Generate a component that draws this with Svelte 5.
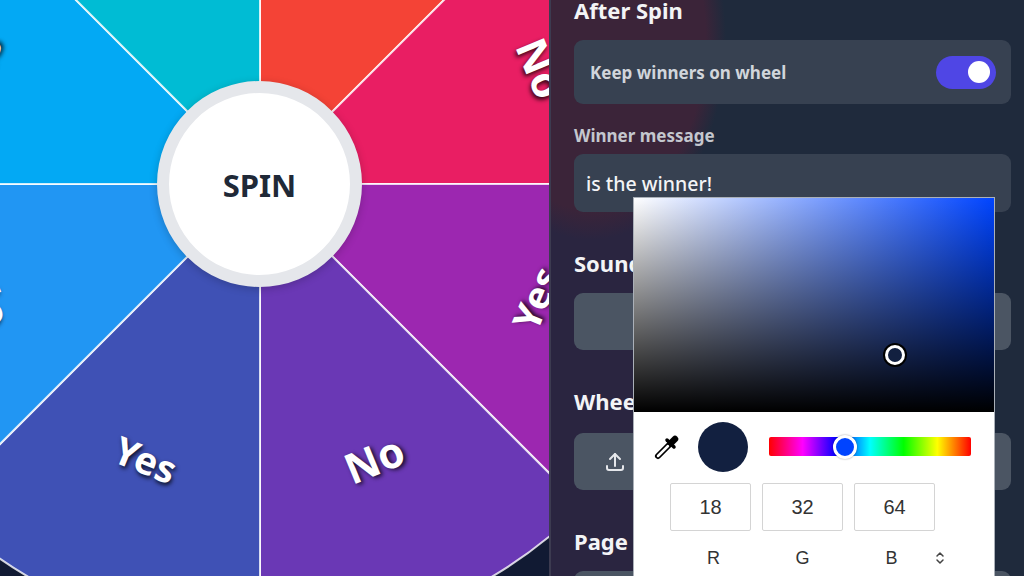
<script>
  const cx = 260;
  const cy = 184;
  const radius = 456;
  const slices = [
    { color: '#f44336', label: 'Yes', r: 298 },
    { color: '#e91e63', label: 'No', r: 304 },
    { color: '#9c27b0', label: 'Yes', r: 298 },
    { color: '#6a38b5', label: 'No', r: 298 },
    { color: '#3f51b5', label: 'Yes', r: 298 },
    { color: '#2196f3', label: 'No', r: 294 },
    { color: '#03a9f4', label: 'Yes', r: 306 },
    { color: '#00bcd4', label: 'No', r: 298 }
  ];

  const toXY = (deg, r) => {
    const rad = (deg * Math.PI) / 180;
    return [cx + r * Math.cos(rad), cy + r * Math.sin(rad)];
  };

  const slicePath = (i) => {
    const start = -90 + i * 45;
    const [x1, y1] = toXY(start, radius);
    const [x2, y2] = toXY(start + 45, radius);
    return `M${cx} ${cy} L${x1} ${y1} A${radius} ${radius} 0 0 1 ${x2} ${y2} Z`;
  };

  const labelStyle = (i) => {
    const angle = -90 + i * 45 + 22.5;
    const [x, y] = toXY(angle, slices[i].r);
    let rot = angle - 90;
    if (rot < -90) rot += 180;
    if (rot > 90) rot -= 180;
    return `left:${x}px;top:${y}px;transform:translate(-50%,-50%) rotate(${rot}deg)`;
  };
</script>

<div class="page">
  <section class="stage">
    <svg class="wheel" width="549" height="576" viewBox="0 0 549 576">
      {#each slices as slice, i}
        <path d={slicePath(i)} fill={slice.color} stroke="#fff" stroke-opacity="0.8" stroke-width="2" />
      {/each}
    </svg>
    {#each slices as slice, i}
      {#if i !== 0 && i !== 7}
        <span class="slice-label" class:no={slice.label === 'No'} style={labelStyle(i)}>{slice.label}</span>
      {/if}
    {/each}
    <button class="spin">SPIN</button>
  </section>

  <aside class="panel">
    <h2 class="first">After Spin</h2>
    <div class="card toggle-row">
      <span>Keep winners on wheel</span>
      <span class="toggle"><span class="knob"></span></span>
    </div>
    <div class="field-label">Winner message</div>
    <div class="card input">is the winner!</div>

    <h2>Sound</h2>
    <div class="card action"></div>

    <h2 class="wheel-title">Wheel</h2>
    <div class="card action upload">
      <svg width="24" height="24" viewBox="0 0 24 24" fill="none" stroke="#e5e7eb" stroke-width="2" stroke-linecap="round" stroke-linejoin="round">
        <path d="M4 16v2a2 2 0 0 0 2 2h12a2 2 0 0 0 2-2v-2" />
        <path d="M7 9l5-5 5 5" />
        <path d="M12 4v12" />
      </svg>
    </div>

    <h2>Page</h2>
    <div class="card action"></div>
  </aside>

  <div class="picker">
    <div class="sv">
      <span class="cursor"></span>
    </div>
    <div class="controls">
      <svg class="dropper" width="28" height="28" viewBox="0 0 28 28" fill="none" stroke-linecap="round">
        <path d="M6 23L17 12" stroke="#000" stroke-width="6" />
        <path d="M6 23L16 13" stroke="#fff" stroke-width="2.500" />
        <path d="M15 7l7 7" stroke="#000" stroke-width="3.500" />
        <path d="M19 10l4-4" stroke="#000" stroke-width="6.500" />
      </svg>
      <span class="swatch"></span>
      <div class="hue"><span class="hue-thumb"></span></div>
    </div>
    <div class="rgb">
      <div class="rgb-box">18</div>
      <div class="rgb-box">32</div>
      <div class="rgb-box">64</div>
    </div>
    <div class="rgb-names">
      <span>R</span>
      <span>G</span>
      <span>B</span>
      <svg width="10" height="14" viewBox="0 0 10 14" fill="none" stroke="#444" stroke-width="1.500" stroke-linecap="round" stroke-linejoin="round">
        <path d="M2 5l3-3 3 3" />
        <path d="M2 9l3 3 3-3" />
      </svg>
    </div>
  </div>
</div>

<style>
  :global(body) {
    margin: 0;
    background: #111a33;
  }

  .page {
    width: 1024px;
    height: 576px;
    display: flex;
    position: relative;
    overflow: hidden;
    font-family: 'Noto Sans', 'Open Sans', sans-serif;
  }

  .stage {
    width: 549px;
    height: 576px;
    flex: none;
    position: relative;
    overflow: hidden;
    background: #111a33;
  }

  .wheel {
    display: block;
  }

  .slice-label {
    position: absolute;
    font-size: 38px;
    font-weight: 700;
    line-height: 1;
    color: #fff;
    text-shadow: 2px 2px 4px rgba(0, 0, 0, 0.8);
  }

  .slice-label.no {
    font-size: 42px;
  }

  .spin {
    position: absolute;
    left: 157px;
    top: 81px;
    width: 205px;
    height: 206px;
    box-sizing: border-box;
    padding: 2px 0 0;
    border: 12px solid #e5e7eb;
    border-radius: 50%;
    background: #fff;
    color: #1f2937;
    font-family: inherit;
    font-size: 31px;
    font-weight: 700;
    box-shadow: 0 2px 8px rgba(0, 0, 0, 0.2);
  }

  .panel {
    flex: 1;
    box-sizing: border-box;
    padding: 0 13px 0 23px;
    border-left: 2px solid #3c3b50;
    overflow: hidden;
    color: #f3f4f6;
    background:
      radial-gradient(135px 200px at 40px 40px, #3b2439 85%, rgba(59, 36, 57, 0) 100%),
      linear-gradient(to right, #2a2540 0, #2a2540 80px, rgba(42, 37, 64, 0) 110px),
      #1f2a3c;
  }

  h2 {
    margin: 36px 0 15px;
    font-size: 22px;
    line-height: 30px;
    font-weight: 700;
    color: #f3f4f6;
  }

  h2.first {
    margin-top: -5px;
    margin-bottom: 15px;
  }

  h2.wheel-title {
    margin-bottom: 17px;
  }

  .card {
    border-radius: 9px;
    box-sizing: border-box;
    background: #374151;
  }

  .toggle-row {
    height: 64px;
    padding: 0 15px 0 16px;
    display: flex;
    align-items: center;
    justify-content: space-between;
    font-size: 17px;
    font-weight: 700;
    color: #d1d5db;
  }

  .toggle {
    width: 60px;
    height: 33px;
    border-radius: 17px;
    background: #4f46e5;
    display: flex;
    align-items: center;
    justify-content: flex-end;
    padding-right: 6px;
    box-sizing: border-box;
  }

  .knob {
    width: 22px;
    height: 22px;
    border-radius: 50%;
    background: #fff;
  }

  .field-label {
    margin-top: 20px;
    margin-bottom: 6px;
    font-size: 17px;
    line-height: 24px;
    font-weight: 700;
    color: #c4c7ce;
  }

  .input {
    height: 58px;
    padding: 17px 12px 0;
    font-size: 19.500px;
    line-height: 26px;
    font-weight: 500;
    color: #f3f4f6;
  }

  .action {
    height: 57px;
    background: #4b5563;
  }

  .upload {
    display: flex;
    align-items: center;
    padding-left: 29px;
  }

  .picker {
    position: absolute;
    left: 633px;
    top: 197px;
    width: 362px;
    height: 390px;
    box-sizing: border-box;
    background: #fff;
    border: 1px solid #aab0b8;
    font-family: 'Liberation Sans', Arial, sans-serif;
  }

  .sv {
    height: 214px;
    position: relative;
    background:
      linear-gradient(to top, #000, rgba(0, 0, 0, 0)),
      linear-gradient(to right, #fff, #0044ff);
  }

  .cursor {
    position: absolute;
    left: 251px;
    top: 147px;
    width: 14px;
    height: 14px;
    border: 3px solid #fff;
    border-radius: 50%;
    background: #122040;
    box-shadow: 0 0 0 2px #000;
  }

  .controls {
    height: 70px;
    display: flex;
    align-items: center;
    padding-left: 18px;
  }

  .dropper {
    flex: none;
  }

  .swatch {
    width: 50px;
    height: 50px;
    margin-left: 18px;
    border-radius: 50%;
    background: #122040;
  }

  .hue {
    width: 202px;
    height: 19px;
    margin: -1px 0 0 21px;
    position: relative;
    border-radius: 2px;
    background: linear-gradient(to right, #f00, #f0f, #00f, #0ff, #0f0, #ff0, #f00);
  }

  .hue-thumb {
    position: absolute;
    left: 64px;
    top: -2px;
    width: 18px;
    height: 18px;
    border: 3px solid #fff;
    border-radius: 50%;
    background: #0044ff;
    box-shadow: 0 0 2px rgba(0, 0, 0, 0.4);
  }

  .rgb {
    display: flex;
    gap: 11px;
    padding-left: 36px;
    margin-top: 1px;
  }

  .rgb-box {
    width: 81px;
    height: 48px;
    box-sizing: border-box;
    border: 1px solid #d4d4d4;
    border-radius: 2px;
    font-size: 20px;
    line-height: 47px;
    text-align: center;
    color: #333;
  }

  .rgb-names {
    display: flex;
    align-items: center;
    padding-left: 35px;
    margin-top: 15px;
    height: 24px;
    font-size: 18px;
    color: #333;
  }

  .rgb-names span {
    width: 89px;
    text-align: center;
  }

  .rgb-names svg {
    margin-left: -1px;
  }
</style>
